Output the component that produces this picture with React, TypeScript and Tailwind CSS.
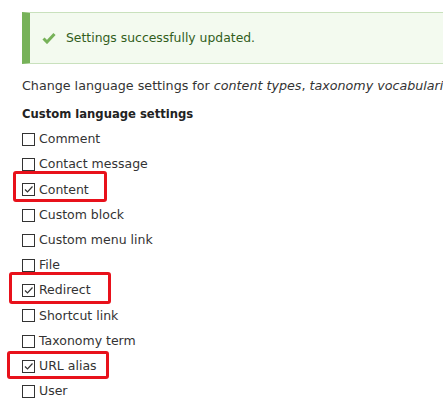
import React from 'react'

const rows = [
  { label: 'Comment', checked: false },
  { label: 'Contact message', checked: false },
  { label: 'Content', checked: true, mark: 'left-[-9px] top-[-6px] w-[94px] h-[31px]' },
  { label: 'Custom block', checked: false },
  { label: 'Custom menu link', checked: false },
  { label: 'File', checked: false },
  { label: 'Redirect', checked: true, mark: 'left-[-13px] top-[-6px] w-[102px] h-[32px]' },
  { label: 'Shortcut link', checked: false },
  { label: 'Taxonomy term', checked: false },
  { label: 'URL alias', checked: true, mark: 'left-[-15px] top-[-3px] w-[102px] h-[28px]' },
  { label: 'User', checked: false },
]

function Box({ checked }: { checked: boolean }) {
  return (
    <span className="w-[13px] h-[13px] border border-[#333] bg-white flex items-center justify-center shrink-0">
      {checked && (
        <svg width="11" height="11" viewBox="0 0 11 11">
          <path d="M2 5.5 L4.5 8 L9.5 2.5" fill="none" stroke="#333" strokeWidth="1.2" />
        </svg>
      )}
    </span>
  )
}

export default function App() {
  return (
    <div className="w-[443px] h-[407px] overflow-hidden bg-white pl-[22px] pt-[12px] text-[#333] font-['DejaVu_Sans',sans-serif]">
      <div className="w-[440px] h-[52px] border border-[#c9e1bd] border-l-[8px] border-l-[#77b259] bg-[#f3faef] flex items-center pl-[12px] gap-[10px] text-[#325e1c] text-[12.4px]">
        <svg width="14" height="12" viewBox="0 0 14 12">
          <path d="M1.5 6.5 L5 10 L12.5 2" fill="none" stroke="#77b259" strokeWidth="3" />
        </svg>
        <span>Settings successfully updated.</span>
      </div>
      <p className="mt-[12px] h-[20px] leading-[20px] text-[12.7px] whitespace-nowrap">
        Change language settings for <em>content types</em>, <em>taxonomy vocabularies</em>, and more.
      </p>
      <h4 className="mt-[8px] h-[20px] leading-[20px] text-[11.6px] font-bold text-[#222]">Custom language settings</h4>
      <ul className="mt-[3px]">
        {rows.map((r) => (
          <li key={r.label} className="relative h-[25.2px] flex items-center gap-[4px] text-[12.5px]">
            <Box checked={r.checked} />
            <span>{r.label}</span>
            {r.mark && (
              <span className={`absolute ${r.mark} border-[3.5px] border-[#e8111b] rounded-[3px]`} />
            )}
          </li>
        ))}
      </ul>
    </div>
  )
}
